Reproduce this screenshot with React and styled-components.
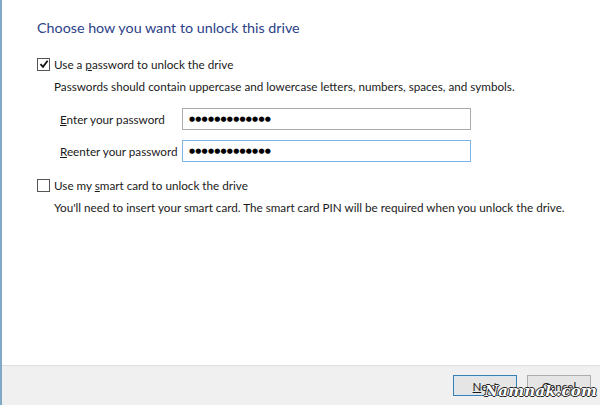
import React from 'react'
import styled, { createGlobalStyle } from 'styled-components';

const GlobalStyle = createGlobalStyle`
  html, body {
    margin: 0;
    padding: 0;
    background: #ffffff;
  }
  body {
    font-family: "Lato", "Noto Sans", sans-serif;
    color: #1a1a1a;
  }
`;

const Window = styled.div`
  width: 600px;
  height: 405px;
  box-sizing: border-box;
  border-left: 2px solid #7fa9c6;
  display: flex;
  flex-direction: column;
  position: relative;
  overflow: hidden;
`;

const Content = styled.div`
  flex: 1;
  padding: 17px 0 0 35px;
  background: #ffffff;
`;

const Title = styled.h1`
  font-family: "Lato", sans-serif;
  font-weight: 400;
  font-size: 14.3px;
  line-height: 22px;
  color: #2b4189;
  margin: 0 0 17px 0;
`;

const Option = styled.label`
  display: flex;
  align-items: center;
  gap: 4px;
  font-size: 11.7px;
  line-height: 16px;
  height: 16px;
  white-space: nowrap;
`;

const Box = styled.span`
  width: 11px;
  height: 11px;
  border: 1px solid #555;
  background: #fff;
  display: flex;
  align-items: center;
  justify-content: center;
`;

const Hint = styled.p`
  margin: 6px 0 0 17px;
  font-size: 11.7px;
  line-height: 16px;
  white-space: nowrap;
`;

const Fields = styled.div`
  display: grid;
  grid-template-columns: 122px 289px;
  row-gap: 10px;
  align-items: center;
  margin: 14px 0 0 23px;
`;

const FieldLabel = styled.span`
  font-size: 11.7px;
  line-height: 16px;
  white-space: nowrap;
`;

const PasswordBox = styled.div`
  height: 22px;
  box-sizing: border-box;
  border: 1px solid ${p => (p.$focused ? '#7eb4ea' : '#ababab')};
  background: #fff;
  display: flex;
  align-items: center;
  padding-left: 6px;
  font-family: "DejaVu Sans", sans-serif;
  font-size: 7px;
  letter-spacing: 0.2px;
  color: #000;
`;

const SmartOption = styled(Option)`
  margin-top: 15px;
`;

const Footer = styled.div`
  height: 40px;
  box-sizing: border-box;
  border-top: 1px solid #dfdfdf;
  background: #f0f0f0;
  display: flex;
  justify-content: flex-end;
  align-items: flex-start;
  gap: 10px;
  padding: 9px 9px 0 0;
`;

const Button = styled.button`
  width: 64px;
  height: 21px;
  box-sizing: border-box;
  border: 1px solid ${p => (p.$primary ? '#3c7fb1' : '#adadad')};
  box-shadow: ${p => (p.$primary ? 'inset 0 0 0 1px #d6e8f6' : 'none')};
  background: #e5e5e5;
  font-family: "Lato", sans-serif;
  font-size: 11.7px;
  color: #1a1a1a;
  padding: 0;
`;

const Watermark = styled.div`
  position: absolute;
  right: 3px;
  bottom: 5px;
  font-family: "DejaVu Serif", serif;
  font-style: italic;
  font-weight: 700;
  font-size: 15px;
  color: #ffffff;
  letter-spacing: 0.2px;
  text-shadow: 1px 0 0 #222, -1px 0 0 #222, 0 1px 0 #222, 0 -1px 0 #222;
`;

function Check({ checked }) {
  return (
    <Box>
      {checked && (
        <svg width="10" height="10" viewBox="0 0 10 10">
          <path d="M1.5 5.2 L4 7.8 L8.6 1.8" fill="none" stroke="#111" strokeWidth="1.8" />
        </svg>
      )}
    </Box>
  );
}

export default function App() {
  return (
    <Window>
      <GlobalStyle />
      <Content>
        <Title>Choose how you want to unlock this drive</Title>
        <Option>
          <Check checked />
          <span>Use a <u>p</u>assword to unlock the drive</span>
        </Option>
        <Hint>Passwords should contain uppercase and lowercase letters, numbers, spaces, and symbols.</Hint>
        <Fields>
          <FieldLabel><u>E</u>nter your password</FieldLabel>
          <PasswordBox>●●●●●●●●●●●●●</PasswordBox>
          <FieldLabel><u>R</u>eenter your password</FieldLabel>
          <PasswordBox $focused>●●●●●●●●●●●●●</PasswordBox>
        </Fields>
        <SmartOption>
          <Check />
          <span>Use my <u>s</u>mart card to unlock the drive</span>
        </SmartOption>
        <Hint>You'll need to insert your smart card. The smart card PIN will be required when you unlock the drive.</Hint>
      </Content>
      <Footer>
        <Button $primary><u>N</u>ext</Button>
        <Button>Cancel</Button>
      </Footer>
      <Watermark>Namnak.com</Watermark>
    </Window>
  )
}
